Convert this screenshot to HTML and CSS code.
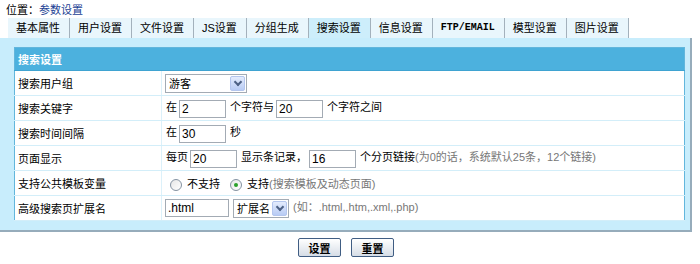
FILE: index.html
```html
<!DOCTYPE html>
<html lang="zh-CN">

<head>
    <meta charset="UTF-8">
    <title>参数设置</title>
    <link rel="stylesheet" href="styles.css">
</head>

<body>
    <div class="crumb">位置：<a href="#">参数设置</a></div>
    <ul class="tabs">
        <li>基本属性</li>
        <li>用户设置</li>
        <li>文件设置</li>
        <li>JS设置</li>
        <li>分组生成</li>
        <li class="on">搜索设置</li>
        <li>信息设置</li>
        <li class="mono">FTP/EMAIL</li>
        <li>模型设置</li>
        <li>图片设置</li>
    </ul>
    <div class="panel">
        <table class="form">
            <tr>
                <th colspan="2">搜索设置</th>
            </tr>
            <tr>
                <td class="label">搜索用户组</td>
                <td><span class="select w82"><span class="val">游客</span><i class="arrow"></i></span></td>
            </tr>
            <tr>
                <td class="label">搜索关键字</td>
                <td>在<input class="txt" value="2">个字符与<input class="txt" value="20">个字符之间</td>
            </tr>
            <tr>
                <td class="label">搜索时间间隔</td>
                <td>在<input class="txt" value="30">秒</td>
            </tr>
            <tr>
                <td class="label">页面显示</td>
                <td>每页<input class="txt" value="20">显示条记录，<input class="txt" value="16">个分页链接<span class="tip">(为0的话，系统默认25条，12个链接)</span></td>
            </tr>
            <tr>
                <td class="label">支持公共模板变量</td>
                <td><span class="radio"></span>不支持<span class="radio checked"></span>支持<span class="tip">(搜索模板及动态页面)</span></td>
            </tr>
            <tr>
                <td class="label">高级搜索页扩展名</td>
                <td><input class="txt w64" value=".html"><span class="select w56"><span class="val">扩展名</span><i class="arrow"></i></span><span class="tip">(如：.html,.htm,.xml,.php)</span></td>
            </tr>
        </table>
    </div>
    <div class="actions">
        <button>设置</button>
        <button>重置</button>
    </div>
</body>

</html>
```

FILE: styles.css
```css
* {
    margin: 0;
    padding: 0;
}

body {
    font: 11px "Liberation Sans", "Noto Sans CJK SC", sans-serif;
    color: #000;
    background: #fff;
}

.crumb {
    height: 17px;
    padding-top: 1px;
    line-height: 18px;
    padding-left: 6px;
}

.crumb a {
    color: #1c3f94;
    text-decoration: none;
}

.tabs {
    list-style: none;
    display: flex;
    margin-left: 8px;
    height: 20px;
}

.tabs li {
    padding: 0 9px 0 8px;
    line-height: 20px;
    background: #e9f6fc;
    border-right: 1px solid #a3b1bc;
}

.tabs li.on {
    background: #cdeefb;
}

.tabs li.mono {
    font: bold 10px "Liberation Mono", monospace;
    line-height: 20px;
}

.panel {
    width: 671px;
    padding: 9px 5px 9px 14px;
    background: #c8edfc;
    border-right: 2px solid #96acbb;
    border-bottom: 2px solid #96acbb;
}

.form {
    width: 671px;
    border-collapse: collapse;
    background: #fff;
    border: 1px solid #62b6dc;
}

.form th {
    height: 22px;
    padding-left: 3px;
    text-align: left;
    color: #fff;
    background: #4cb1de;
    border-bottom: 1px solid #3fa3d1;
}

.form td {
    height: 24px;
    padding: 0 4px;
    border-bottom: 1px solid #d3eef9;
    white-space: nowrap;
}

.form td.label {
    width: 140px;
    padding: 0 3px;
    border-right: 1px solid #dcf1fa;
}

.txt {
    width: 47px;
    height: 18px;
    margin: 0 4px 0 2px;
    padding: 0 2px;
    font: 12px "Liberation Sans", sans-serif;
    border: 1px solid #a3abb4;
    vertical-align: middle;
    box-sizing: border-box;
}

.txt.w64 {
    width: 64px;
    margin-left: -1px;
}

.select {
    display: inline-flex;
    align-items: center;
    height: 19px;
    margin-right: 4px;
    border: 1px solid #a3abb4;
    vertical-align: middle;
    box-sizing: border-box;
}

.select.w82 {
    width: 82px;
    margin-left: -1px;
}

.select.w56 {
    width: 56px;
}

.select .val {
    flex: 1;
    padding-left: 3px;
}

.select .arrow {
    position: relative;
    width: 15px;
    height: 15px;
    margin-right: 1px;
    border: 1px solid #b4c6ee;
    border-radius: 2px;
    background: linear-gradient(#e4ecfd, #b8cbf4);
    box-sizing: border-box;
}

.select .arrow::after {
    content: "";
    position: absolute;
    left: 4px;
    top: 2px;
    width: 4px;
    height: 4px;
    border-right: 2px solid #4d6185;
    border-bottom: 2px solid #4d6185;
    transform: rotate(45deg);
}

.radio {
    display: inline-block;
    position: relative;
    width: 12px;
    height: 12px;
    margin: 0 5px 0 4px;
    border: 1px solid #8593a2;
    border-radius: 50%;
    background: linear-gradient(135deg, #e6e6e6, #fff);
    vertical-align: middle;
    box-sizing: border-box;
}

.radio + .radio,
.radio.checked {
    margin-left: 10px;
}

.radio.checked::after {
    content: "";
    position: absolute;
    left: 3px;
    top: 3px;
    width: 4px;
    height: 4px;
    border-radius: 50%;
    background: #2aa12a;
}

.tip {
    color: #777;
}

.actions {
    display: flex;
    justify-content: center;
    gap: 10px;
    margin-top: 6px;
    width: 692px;
}

.actions button {
    width: 43px;
    height: 19px;
    font: bold 11px "Liberation Sans", "Noto Sans CJK SC", sans-serif;
    color: #000;
    border: 1px solid #405d83;
    border-radius: 2px;
    background: linear-gradient(#fff, #d6dde6);
}
```
